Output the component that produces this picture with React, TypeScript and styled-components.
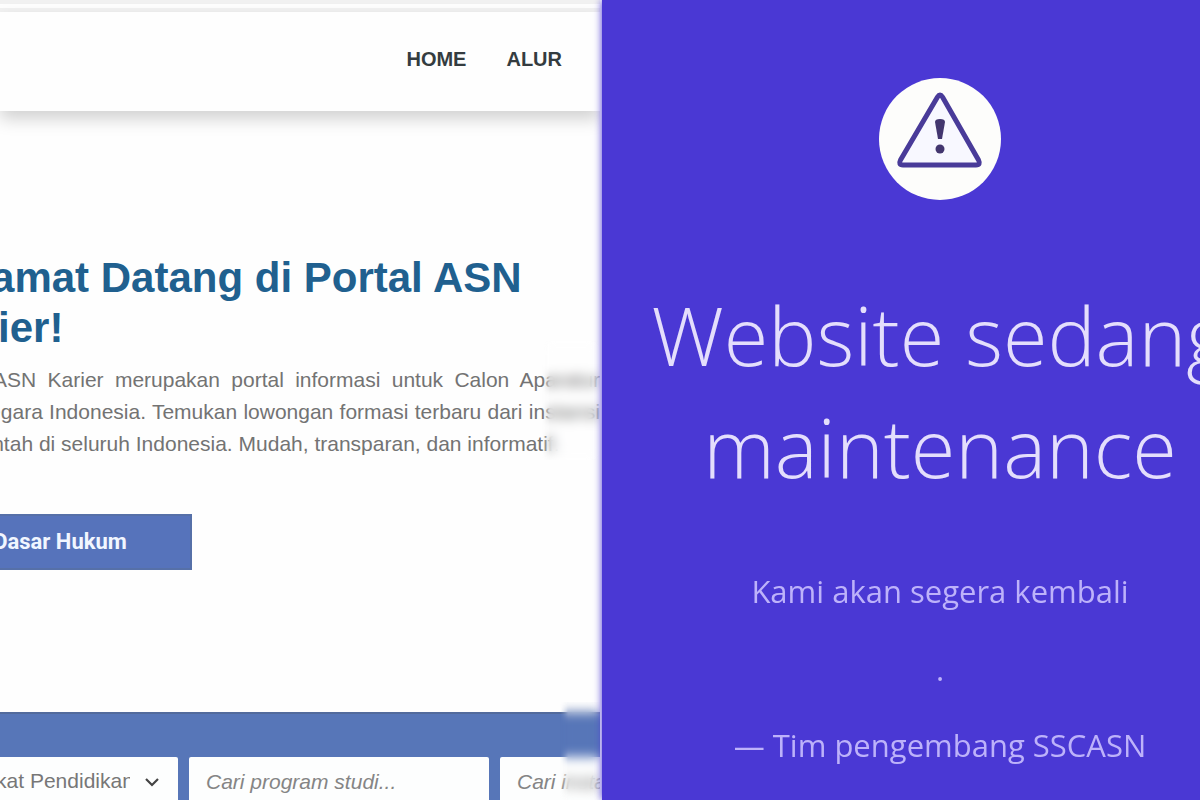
import React from "react";
import styled, { createGlobalStyle } from "styled-components";

const GlobalStyle = createGlobalStyle`
  * { box-sizing: border-box; }
  body { margin: 0; background: #fefefe; }
  h1, h2, p { margin: 0; }
`;

const bleed = 72;

const Page = styled.main`
  display: grid;
  grid-template-columns: 1fr 1fr;
  height: 100vh;
  overflow: hidden;
`;

const Portal = styled.section`
  display: flex;
  flex-direction: column;
  min-width: 0;
  overflow: hidden;
  background: #fefefe;
  font-family: "Liberation Sans", Arial, sans-serif;
`;

const TopStripes = styled.div`
  flex: none;
  height: 12px;
  border-top: 4px solid #f1f1f1;
  border-bottom: 4px solid #f2f2f2;
`;

const Nav = styled.nav`
  flex: none;
  display: flex;
  align-items: center;
  justify-content: flex-end;
  gap: 40px;
  height: 99px;
  padding: 0 38px 6px 0;
  box-shadow: 0 8px 16px rgba(0, 0, 0, 0.18);
`;

const NavLink = styled.a`
  color: #343c40;
  font-size: 20px;
  font-weight: 700;
  line-height: 24px;
  text-decoration: none;
`;

const Hero = styled.div`
  flex: none;
  margin-left: -${bleed}px;
  padding-top: 142px;
`;

const Title = styled.h1`
  color: #20608f;
  font-size: 42px;
  line-height: 50px;
`;

const Intro = styled.p`
  position: relative;
  padding-top: 11px;
  color: #737373;
  font-size: 21px;
  line-height: 32px;
`;

const Line = styled.span<{ $last?: boolean }>`
  display: block;
  white-space: nowrap;
  text-align-last: ${(p) => (p.$last ? "left" : "justify")};
`;

const LawButton = styled.button`
  display: block;
  margin-top: 54px;
  width: 264px;
  height: 56px;
  border: 2px solid #5670a8;
  background: #5673bb;
  color: #f1f6ff;
  font: 700 22px/28px Roboto, sans-serif;
`;

const SearchBar = styled.form`
  position: relative;
  flex: none;
  display: flex;
  gap: 11px;
  margin: 142px 0 0 -${bleed}px;
  padding-top: 43px;
  height: 120px;
  border-top: 2px solid #526a9c;
  background: #5776b8;
`;

const SelectWrap = styled.div`
  position: relative;
  flex: none;
  width: 250px;
  height: 50px;
`;

const Select = styled.select`
  appearance: none;
  width: 100%;
  height: 100%;
  padding: 0 48px 2px 28px;
  border: 0;
  border-radius: 2px;
  background: #fdfefe;
  color: #777;
  font: 21px/24px "Liberation Sans", Arial, sans-serif;
`;

const Chevron = styled.svg`
  position: absolute;
  right: 18px;
  top: 17px;
  width: 16px;
  height: 16px;
  pointer-events: none;
`;

const Field = styled.input`
  flex: none;
  width: 300px;
  height: 50px;
  padding: 0 17px;
  border: 0;
  border-radius: 2px;
  background: #fdfefe;
  color: #555;
  font: italic 21px/24px "Liberation Sans", Arial, sans-serif;
  &::placeholder { color: #858585; opacity: 1; }
`;

const SoftEdge = styled.span<{ $width: number }>`
  position: absolute;
  top: -12px;
  right: 0;
  bottom: 0;
  width: ${(p) => p.$width}px;
  backdrop-filter: blur(6px);
  mask-image: linear-gradient(to right, transparent, #000 8px);
  pointer-events: none;
`;

const Notice = styled.section`
  position: relative;
  min-width: 0;
  margin-left: 2px;
  background: #4a38d4;
  box-shadow: 0 0 8px 0 #4a38d4;
`;

const NoticeBody = styled.div`
  display: flex;
  flex-direction: column;
  align-items: center;
  margin: 0 -80px 0 -2px;
  padding-top: 77px;
  color: #bdb2fa;
  font-family: "Open Sans", sans-serif;
  font-size: 31px;
  line-height: 40px;
  text-align: center;
`;

const Badge = styled.svg`
  width: 124px;
  height: 124px;
`;

const NoticeTitle = styled.h2`
  padding: 78px 0 68px;
  color: #e4defc;
  font-size: 81px;
  font-weight: 300;
  line-height: 112px;
`;

const Dot = styled.p`
  padding: 38px 0 36px;
`;

export default function App() {
  return (
    <Page>
      <GlobalStyle />
      <Portal>
        <TopStripes />
        <Nav>
          <NavLink href="#home">HOME</NavLink>
          <NavLink href="#alur">ALUR</NavLink>
        </Nav>
        <Hero>
          <Title>
            Selamat Datang di Portal ASN
            <br />
            Karier!
          </Title>
          <Intro>
            <Line>Portal ASN Karier merupakan portal informasi untuk Calon Aparatur</Line>
            <Line>Sipil Negara Indonesia. Temukan lowongan formasi terbaru dari instansi</Line>
            <Line $last>pemerintah di seluruh Indonesia. Mudah, transparan, dan informatif.</Line>
            <SoftEdge $width={58} />
          </Intro>
          <LawButton type="button">Dasar Hukum</LawButton>
        </Hero>
        <SearchBar>
          <SelectWrap>
            <Select aria-label="Tingkat Pendidikan">
              <option>Tingkat Pendidikan</option>
            </Select>
            <Chevron viewBox="0 0 16 16" fill="none" stroke="#444" strokeWidth="2.2" aria-hidden="true">
              <path d="M2 5l6 6 6-6" />
            </Chevron>
          </SelectWrap>
          <Field aria-label="Program studi" placeholder="Cari program studi..." />
          <Field aria-label="Instansi" placeholder="Cari instansi..." />
          <SoftEdge $width={40} />
        </SearchBar>
      </Portal>
      <Notice>
        <NoticeBody>
          <Badge viewBox="0 0 124 124" aria-hidden="true">
            <circle cx="62" cy="62" r="61" fill="#fdfdfb" />
            <path
              d="M59.500 20Q62 16 64.500 20L100.500 83Q103 88 98 88H25Q20 88 22.500 83Z"
              fill="#f8f8ff"
              stroke="#493b99"
              strokeWidth="5"
              strokeLinejoin="round"
            />
            <path d="M57 45Q57 42 62 42Q67 42 67 45L64 62H60Z" fill="#43366f" />
            <circle cx="62" cy="72" r="4.500" fill="#43366f" />
          </Badge>
          <NoticeTitle>
            Website sedang
            <br />
            maintenance
          </NoticeTitle>
          <p>Kami akan segera kembali</p>
          <Dot>.</Dot>
          <p>— Tim pengembang SSCASN</p>
        </NoticeBody>
      </Notice>
    </Page>
  );
}
